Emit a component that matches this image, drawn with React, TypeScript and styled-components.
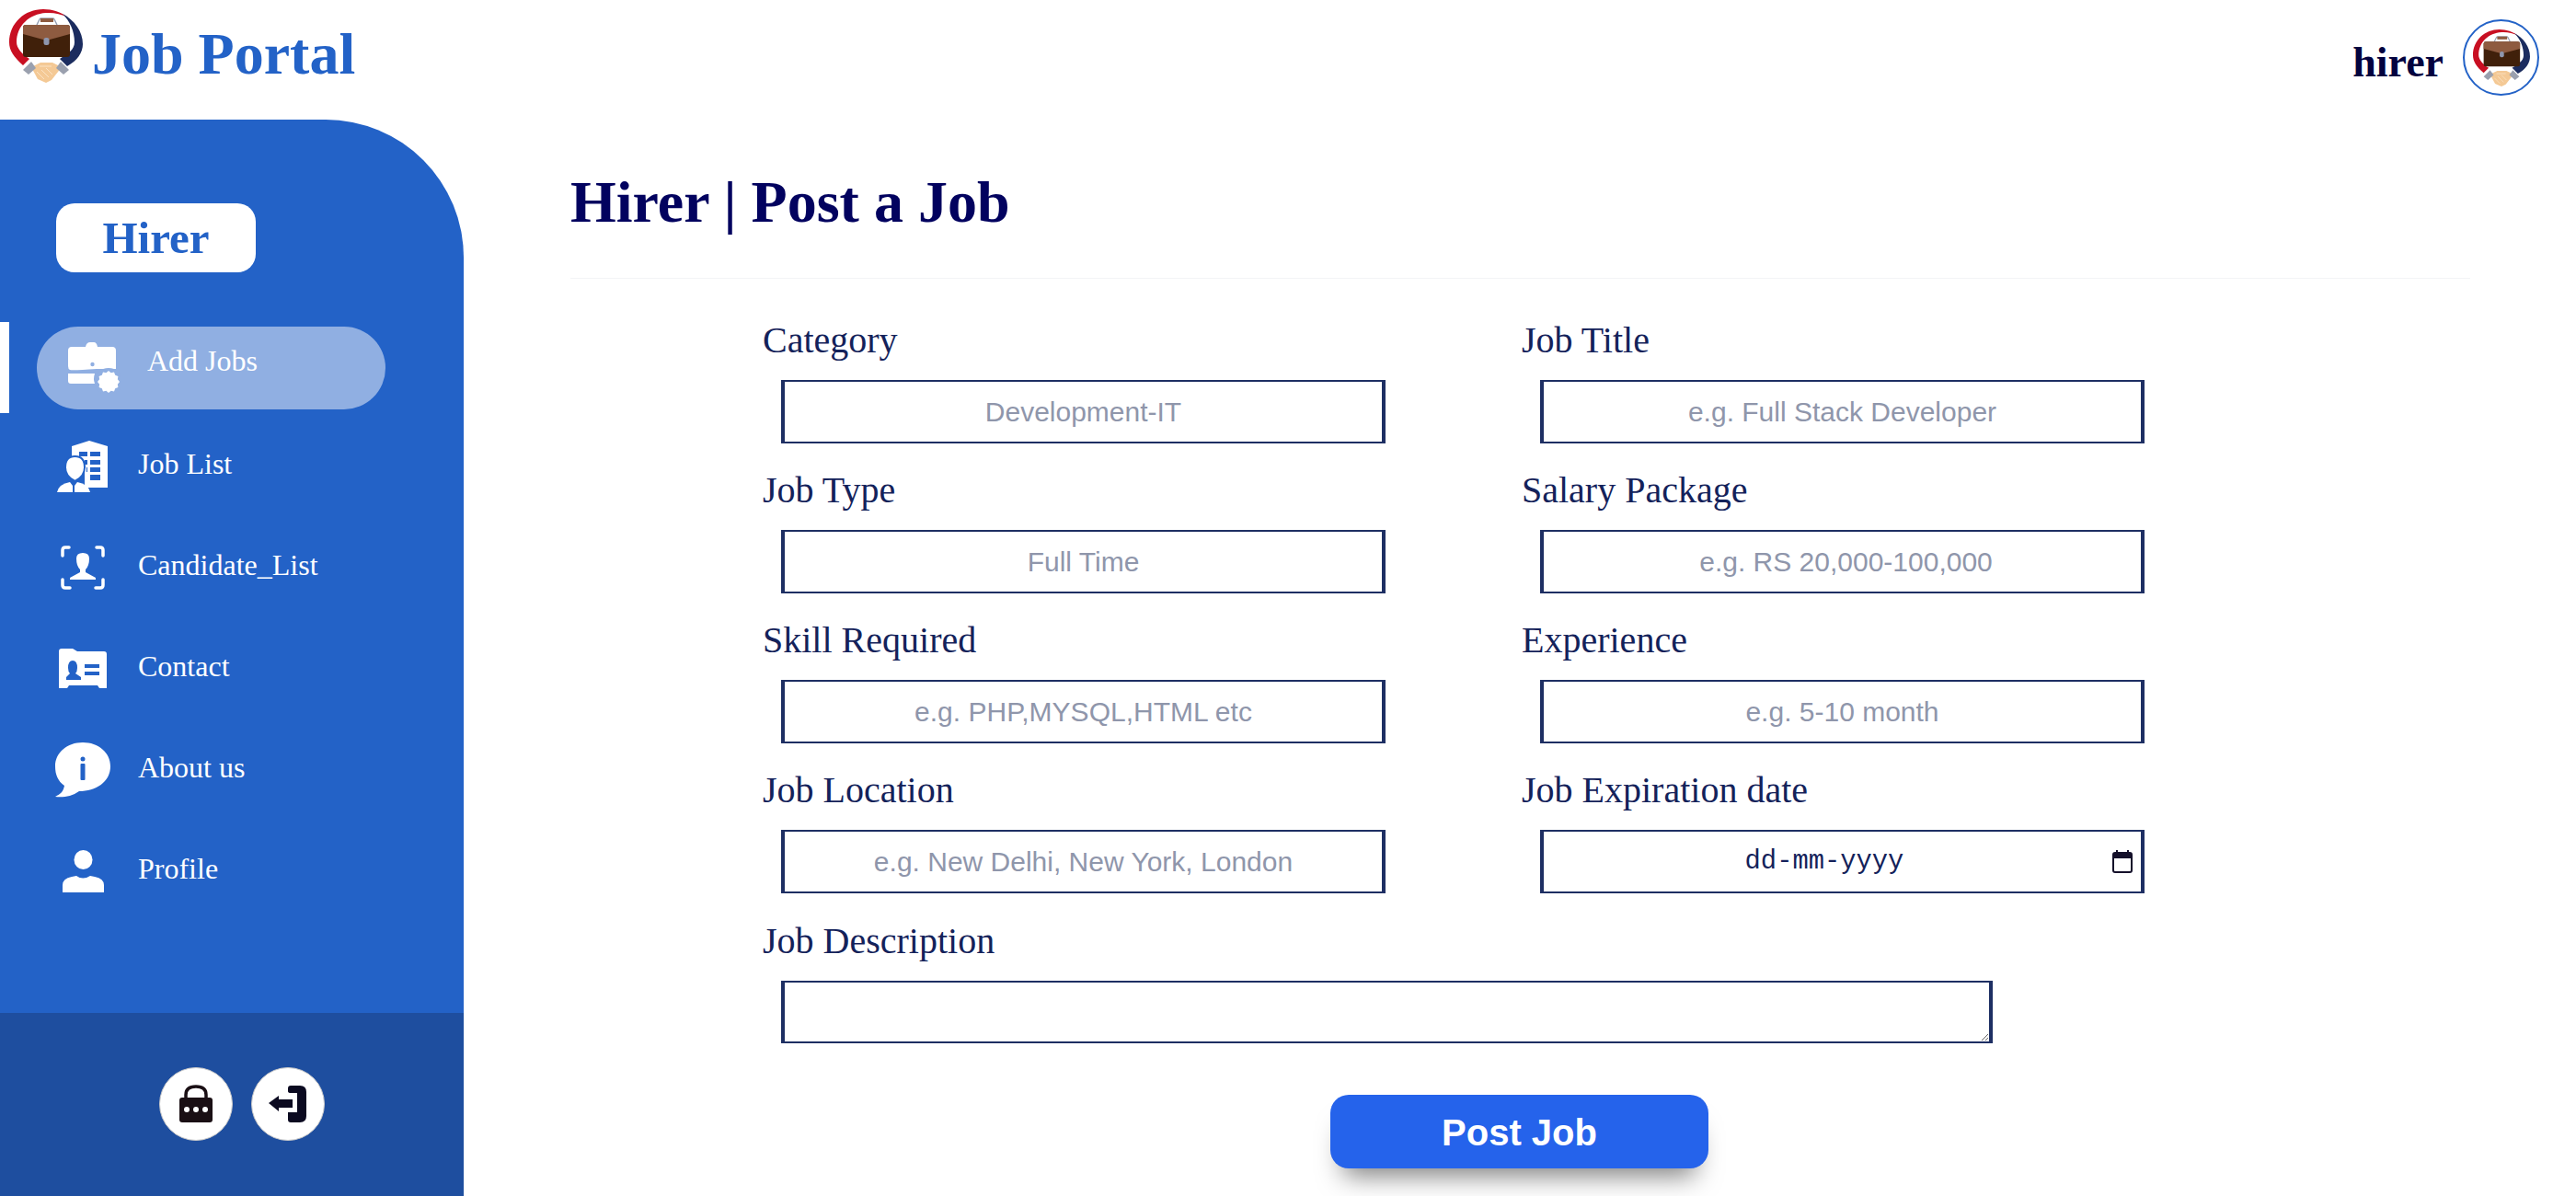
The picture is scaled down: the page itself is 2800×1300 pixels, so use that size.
import React from "react";
import styled, { createGlobalStyle } from "styled-components";

const Global = createGlobalStyle`
  html, body { margin: 0; padding: 0; background: #fff; }
  body { font-family: "Liberation Serif", "Times New Roman", serif; overflow: hidden; }
  * { box-sizing: border-box; }
`;

const Page = styled.div`
  width: 2800px;
  height: 1300px;
  display: flex;
  flex-direction: column;
`;
const Header = styled.header`
  height: 130px;
  display: flex;
  align-items: flex-start;
  justify-content: space-between;
  padding: 10px 40px 0 10px;
`;
const Brand = styled.div`
  display: flex;
  align-items: center;
  gap: 10px;
  height: 80px;
  svg { flex: none; }
`;
const BrandName = styled.h1`
  margin: 0;
  padding-top: 18px;
  font-size: 64px;
  font-weight: 700;
  line-height: 1;
  color: #2362c7;
  white-space: nowrap;
`;
const UserBox = styled.div`
  display: flex;
  align-items: center;
  gap: 21px;
  margin-top: 11px;
`;
const UserName = styled.span`
  padding-top: 10px;
  font-size: 46px;
  font-weight: 700;
  color: #03033f;
`;
const Avatar = styled.div`
  width: 83px;
  height: 83px;
  border-radius: 50%;
  border: 2px solid #2362c7;
  display: flex;
  align-items: center;
  justify-content: center;
`;
const Body = styled.div`
  flex: 1;
  display: flex;
  min-height: 0;
`;
const Sidebar = styled.aside`
  width: 504px;
  flex: none;
  display: flex;
  flex-direction: column;
  background: #2362c7;
  border-top-right-radius: 150px;
  overflow: hidden;
`;
const SideTop = styled.div`
  height: 971px;
  padding-top: 91px;
`;
const RoleBadge = styled.div`
  width: 217px;
  height: 75px;
  margin-left: 61px;
  border-radius: 20px;
  background: #fff;
  color: #2362c7;
  font-size: 49px;
  font-weight: 700;
  display: flex;
  align-items: center;
  justify-content: center;
`;
const Nav = styled.nav`
  margin-top: 54px;
  display: flex;
  flex-direction: column;
`;
const NavRow = styled.a<{ $active?: boolean }>`
  display: flex;
  align-items: center;
  color: #fff;
  font-size: 32px;
  height: ${(p) => (p.$active ? "99px" : "110px")};
  margin-bottom: ${(p) => (p.$active ? "3px" : "0")};
  border-left: ${(p) => (p.$active ? "10px solid #fff" : "0")};
  padding-left: ${(p) => (p.$active ? "30px" : "0")};
`;
const NavPill = styled.div<{ $active?: boolean }>`
  display: flex;
  align-items: center;
  width: ${(p) => (p.$active ? "379px" : "auto")};
  height: ${(p) => (p.$active ? "90px" : "auto")};
  border-radius: 45px;
  background: ${(p) => (p.$active ? "#90afe2" : "transparent")};
`;
const IconSlot = styled.span<{ $active?: boolean }>`
  width: ${(p) => (p.$active ? "120px" : "150px")};
  display: flex;
  justify-content: center;
  padding-left: ${(p) => (p.$active ? "6px" : "30px")};
  flex: none;
  svg { display: block; }
`;
const NavLabel = styled.span<{ $active?: boolean }>`
  margin-top: ${(p) => (p.$active ? "-14px" : "-6px")};
  white-space: nowrap;
`;
const SideBottom = styled.div`
  flex: 1;
  background: #1e4e9f;
  display: flex;
  justify-content: center;
  gap: 20px;
  padding-top: 59px;
  padding-left: 22px;
`;
const RoundButton = styled.button`
  width: 80px;
  height: 80px;
  border-radius: 50%;
  background: #fff;
  border: 1px solid #c9c9c9;
  padding: 0;
  display: flex;
  align-items: center;
  justify-content: center;
`;
const Main = styled.main`
  flex: 1;
  min-width: 0;
  padding: 0 115px 0 116px;
`;
const TitleBar = styled.div`
  height: 173px;
  border-bottom: 1px solid #f3f4f6;
  display: flex;
  align-items: center;
  padding-top: 8px;
`;
const Title = styled.h2`
  margin: 0;
  font-size: 64px;
  font-weight: 700;
  color: #02025f;
  white-space: nowrap;
`;
const Form = styled.form`
  padding: 42px 0 0 209px;
  display: flex;
  flex-direction: column;
`;
const Grid = styled.div`
  display: grid;
  grid-template-columns: 825px 825px;
  grid-auto-rows: 163px;
  margin-bottom: 1px;
`;
const Field = styled.div`
  display: flex;
  flex-direction: column;
`;
const Label = styled.label`
  font-size: 40px;
  line-height: 50px;
  color: #14225a;
  margin-bottom: 18px;
  white-space: nowrap;
`;
const TextInput = styled.input<{ $nudge?: number }>`
  width: 657px;
  height: 69px;
  margin-left: 20px;
  border-style: solid;
  border-color: #1e2f63;
  border-width: 2px 4px 2px 4px;
  background: #fff;
  font-family: "Liberation Sans", Arial, sans-serif;
  font-size: 30px;
  text-align: center;
  outline: none;
  padding: 0 0 0 ${(p) => p.$nudge ?? 0}px;
  &::placeholder { color: #8f96ab; opacity: 1; }
`;
const DateBox = styled.div`
  width: 657px;
  height: 69px;
  margin-left: 20px;
  border-style: solid;
  border-color: #1e2f63;
  border-width: 2px 4px 2px 4px;
  display: flex;
  align-items: center;
  padding-right: 9px;
  svg { flex: none; }
`;
const DateText = styled.span`
  flex: 1;
  padding-right: 8px;
  text-align: center;
  font-family: "Liberation Mono", "Courier New", monospace;
  font-size: 28.8px;
  color: #14225a;
`;
const TextArea = styled.textarea`
  display: block;
  width: 1317px;
  height: 68px;
  margin-left: 20px;
  border-style: solid;
  border-color: #1e2f63;
  border-width: 2px 4px 2px 4px;
  outline: none;
  padding: 0;
  resize: both;
`;
const Submit = styled.button`
  align-self: flex-start;
  width: 411px;
  height: 80px;
  margin: 56px 0 0 617px;
  padding: 2px 0 0;
  border: 0;
  border-radius: 20px;
  background: #2563eb;
  color: #fff;
  font-family: "Liberation Sans", Arial, sans-serif;
  font-size: 40px;
  font-weight: 700;
  box-shadow: 0 22px 28px -14px rgba(0, 0, 0, 0.5);
`;

const Logo = ({ size }: { size: number }) => (
  <svg width={size} height={size} viewBox="0 0 80 80" aria-hidden="true">
    <path d="M15 61 C5 52 0 45 0 36 C0 15 17 0 37 0 C47 0 56 3 64 9 C56 5 48 3.500 40 4 C22 5 8 18 8 36 C8 42 14 49 22 54 Z" fill="#c80f22" />
    <path d="M58 5 C71 12 80 24 80 38 C80 47 74 56 63 62 L55 54 C64 48 71 44 71 36 C71 24 66 13 58 5 Z" fill="#1b2c5f" />
    <path d="M30 17 L33 11 Q33.500 10 35 10 H47 Q48.500 10 49 11 L52 17" fill="none" stroke="#96a0b4" strokeWidth="1.500" />
    <rect x="34" y="10" width="14" height="4" fill="#8e5b40" />
    <rect x="15" y="17" width="51" height="35" rx="3" fill="#40200a" />
    <path d="M15 27 V20 Q15 17 18 17 H63 Q66 17 66 20 V27 L40.500 34 Z" fill="#8e5b40" />
    <rect x="37.500" y="31" width="6" height="8" rx="2.500" fill="#8e96ad" />
    <path d="M24 63 L34 58 H47 L57 63 L46 77 L40 80 L31 76 Z" fill="#f4c995" />
    <g stroke="#fbe3c4" strokeWidth="1" fill="none">
      <path d="M30 68 L38 76" />
      <path d="M35 66 L43 74" />
      <path d="M40 64 L47 71" />
      <path d="M33 62 H46" />
    </g>
    <path d="M15 66 L24 57 L29 64 L21 71 Z" fill="#9aa0ae" />
    <path d="M65 66 L56 57 L51 64 L59 71 Z" fill="#9aa0ae" />
  </svg>
);

const w = "#fff";
const b = "#2362c7";

const gearPoints = Array.from({ length: 24 }, (_, i) => {
  const r = i % 2 === 0 ? 12 : 10.200;
  const a = (i * Math.PI) / 12;
  return `${(44 + r * Math.cos(a)).toFixed(2)},${(43 + r * Math.sin(a)).toFixed(2)}`;
}).join(" ");

const AddJobsIcon = () => (
  <svg width="58" height="56" viewBox="0 0 58 56" aria-hidden="true">
    <path d="M0 9 Q0 5 4 5 H19 Q20 0 24 0 H28 Q31 0 32 5 H48 Q52 5 52 9 V29 H31 Q4 31 2 30 Q0 29 0 26 Z" fill={w} />
    <circle cx="44" cy="43" r="15" fill="#90afe2" />
    <circle cx="26.500" cy="24" r="2.200" fill="#90afe2" />
    <path d="M0 34 H29 Q27 40 29 45 H3 Q0 45 0 42 Z" fill={w} />
    <polygon points={gearPoints} fill={w} />
  </svg>
);
const JobListIcon = () => (
  <svg width="56" height="56" viewBox="0 0 56 56" aria-hidden="true">
    <path d="M16 6 L35 0 L55 6 V51 H30 V30 H16 Z" fill={w} />
    <g fill={b}>
      <rect x="24" y="12" width="9" height="5" />
      <rect x="36" y="12" width="11" height="5" />
      <rect x="30" y="21" width="3" height="5" />
      <rect x="36" y="21" width="11" height="5" />
      <rect x="32" y="29" width="1" height="5" />
      <rect x="36" y="29" width="11" height="5" />
      <rect x="36" y="37" width="11" height="6" />
    </g>
    <path d="M9 29 Q9 17 19.500 17 Q30 17 30 29 Q30 39 19.500 44 Q9 39 9 29 Z" fill={w} stroke={b} strokeWidth="2" />
    <path d="M0 56 Q2 47 14 45 L17 49 V56 Z" fill={w} />
    <path d="M19 56 V49 L22 45 Q34 47 36 56 Z" fill={w} />
  </svg>
);
const CandidateIcon = () => (
  <svg width="48" height="48" viewBox="0 0 48 48" aria-hidden="true">
    <g fill="none" stroke={w} strokeWidth="3.500" strokeLinecap="round">
      <path d="M9 2 H5 Q2 2 2 5 V11" />
      <path d="M39 2 H43 Q46 2 46 5 V11" />
      <path d="M2 37 V43 Q2 46 5 46 H10" />
      <path d="M46 37 V43 Q46 46 43 46 H38" />
    </g>
    <path d="M17 14 Q17 8 24 8 Q31 8 31 14 Q31 22 27 26 V29 L38 35 V37 H10 V35 L21 29 V26 Q17 22 17 14 Z" fill={w} />
  </svg>
);
const ContactIcon = () => (
  <svg width="52" height="44" viewBox="0 0 52 44" aria-hidden="true">
    <path d="M0 3 Q0 0 3 0 H15 L20 3 H49 Q52 3 52 6 V43 H44 L42 40 H11 L9 43 H0 Z" fill={w} />
    <path d="M10 21 Q10 13 15 13 Q20 13 20 21 Q20 25 18 27 L24 31 V34 H8 V31 L12 27 Q10 25 10 21 Z" fill={b} />
    <rect x="28" y="17" width="16" height="4" fill={b} />
    <rect x="28" y="25" width="16" height="4" fill={b} />
  </svg>
);
const AboutIcon = () => (
  <svg width="60" height="60" viewBox="0 0 60 60" aria-hidden="true">
    <path d="M30 0 C47 0 60 11 60 26 C60 43 44 53 26 53 C18 59 8 60 0 59 C6 56 9 53 10 47 C3 42 0 35 0 26 C0 11 13 0 30 0 Z" fill={w} />
    <circle cx="30" cy="18" r="2.500" fill={b} />
    <rect x="27.500" y="23" width="5" height="18" rx="1" fill={b} />
  </svg>
);
const ProfileIcon = () => (
  <svg width="45" height="46" viewBox="0 0 45 46" aria-hidden="true">
    <ellipse cx="22.500" cy="10.500" rx="10" ry="10.500" fill={w} />
    <path d="M0 46 V38 Q0 31 10 29 L15 28 Q22 33 30 28 L35 29 Q45 31 45 38 V46 Z" fill={w} />
  </svg>
);
const LockIcon = () => (
  <svg width="38" height="42" viewBox="0 0 38 42" aria-hidden="true">
    <path d="M8 15 V11 Q8 2 19 2 Q30 2 30 11 V15" fill="none" stroke="#1a0f14" strokeWidth="3.500" />
    <rect x="1" y="14" width="36" height="27" rx="3" fill="#1a0f14" />
    <circle cx="9" cy="27" r="3" fill="#fff" />
    <circle cx="19" cy="27" r="3" fill="#fff" />
    <circle cx="29" cy="27" r="3" fill="#fff" />
  </svg>
);
const ExitIcon = () => (
  <svg width="42" height="40" viewBox="0 0 42 40" aria-hidden="true">
    <path d="M0 19 L11 11 V15 H26 V24 H11 V28 Z" fill="#0b0a20" />
    <path d="M21 6 V3 Q21 0 24 0 H34 Q41 0 41 7 V33 Q41 40 34 40 H24 Q21 40 21 37 V29 H31 V8 H24 Q21 8 21 6 Z" fill="#0b0a20" />
  </svg>
);
const CalendarIcon = () => (
  <svg width="22" height="25" viewBox="0 0 22 25" aria-hidden="true">
    <rect x="1" y="3" width="20" height="21" rx="2" fill="none" stroke="#14102a" strokeWidth="2" />
    <rect x="1" y="3" width="20" height="6" fill="#14102a" />
    <rect x="4" y="0" width="2" height="4" fill="#14102a" />
    <rect x="16" y="0" width="2" height="4" fill="#14102a" />
  </svg>
);

const navItems = [
  { label: "Add Jobs", icon: <AddJobsIcon />, active: true },
  { label: "Job List", icon: <JobListIcon /> },
  { label: "Candidate_List", icon: <CandidateIcon /> },
  { label: "Contact", icon: <ContactIcon /> },
  { label: "About us", icon: <AboutIcon /> },
  { label: "Profile", icon: <ProfileIcon /> },
];

const fields: { label: string; placeholder?: string; date?: boolean; nudge?: number }[] = [
  { label: "Category", placeholder: "Development-IT" },
  { label: "Job Title", placeholder: "e.g. Full Stack Developer" },
  { label: "Job Type", placeholder: "Full Time" },
  { label: "Salary Package", placeholder: "e.g. RS 20,000-100,000", nudge: 8 },
  { label: "Skill Required", placeholder: "e.g. PHP,MYSQL,HTML etc" },
  { label: "Experience", placeholder: "e.g. 5-10 month" },
  { label: "Job Location", placeholder: "e.g. New Delhi, New York, London" },
  { label: "Job Expiration date", date: true },
];

export default function App() {
  return (
    <Page>
      <Global />
      <Header>
        <Brand>
          <Logo size={80} />
          <BrandName>Job Portal</BrandName>
        </Brand>
        <UserBox>
          <UserName>hirer</UserName>
          <Avatar>
            <Logo size={62} />
          </Avatar>
        </UserBox>
      </Header>
      <Body>
        <Sidebar>
          <SideTop>
            <RoleBadge>Hirer</RoleBadge>
            <Nav>
              {navItems.map((item) => (
                <NavRow key={item.label} $active={item.active}>
                  <NavPill $active={item.active}>
                    <IconSlot $active={item.active}>{item.icon}</IconSlot>
                    <NavLabel $active={item.active}>{item.label}</NavLabel>
                  </NavPill>
                </NavRow>
              ))}
            </Nav>
          </SideTop>
          <SideBottom>
            <RoundButton><LockIcon /></RoundButton>
            <RoundButton><ExitIcon /></RoundButton>
          </SideBottom>
        </Sidebar>
        <Main>
          <TitleBar>
            <Title>Hirer | Post a Job</Title>
          </TitleBar>
          <Form>
            <Grid>
              {fields.map((f) => (
                <Field key={f.label}>
                  <Label>{f.label}</Label>
                  {f.date ? (
                    <DateBox>
                      <DateText>dd-mm-yyyy</DateText>
                      <CalendarIcon />
                    </DateBox>
                  ) : (
                    <TextInput placeholder={f.placeholder} $nudge={f.nudge} />
                  )}
                </Field>
              ))}
            </Grid>
            <Field>
              <Label>Job Description</Label>
              <TextArea />
            </Field>
            <Submit type="button">Post Job</Submit>
          </Form>
        </Main>
      </Body>
    </Page>
  );
}
